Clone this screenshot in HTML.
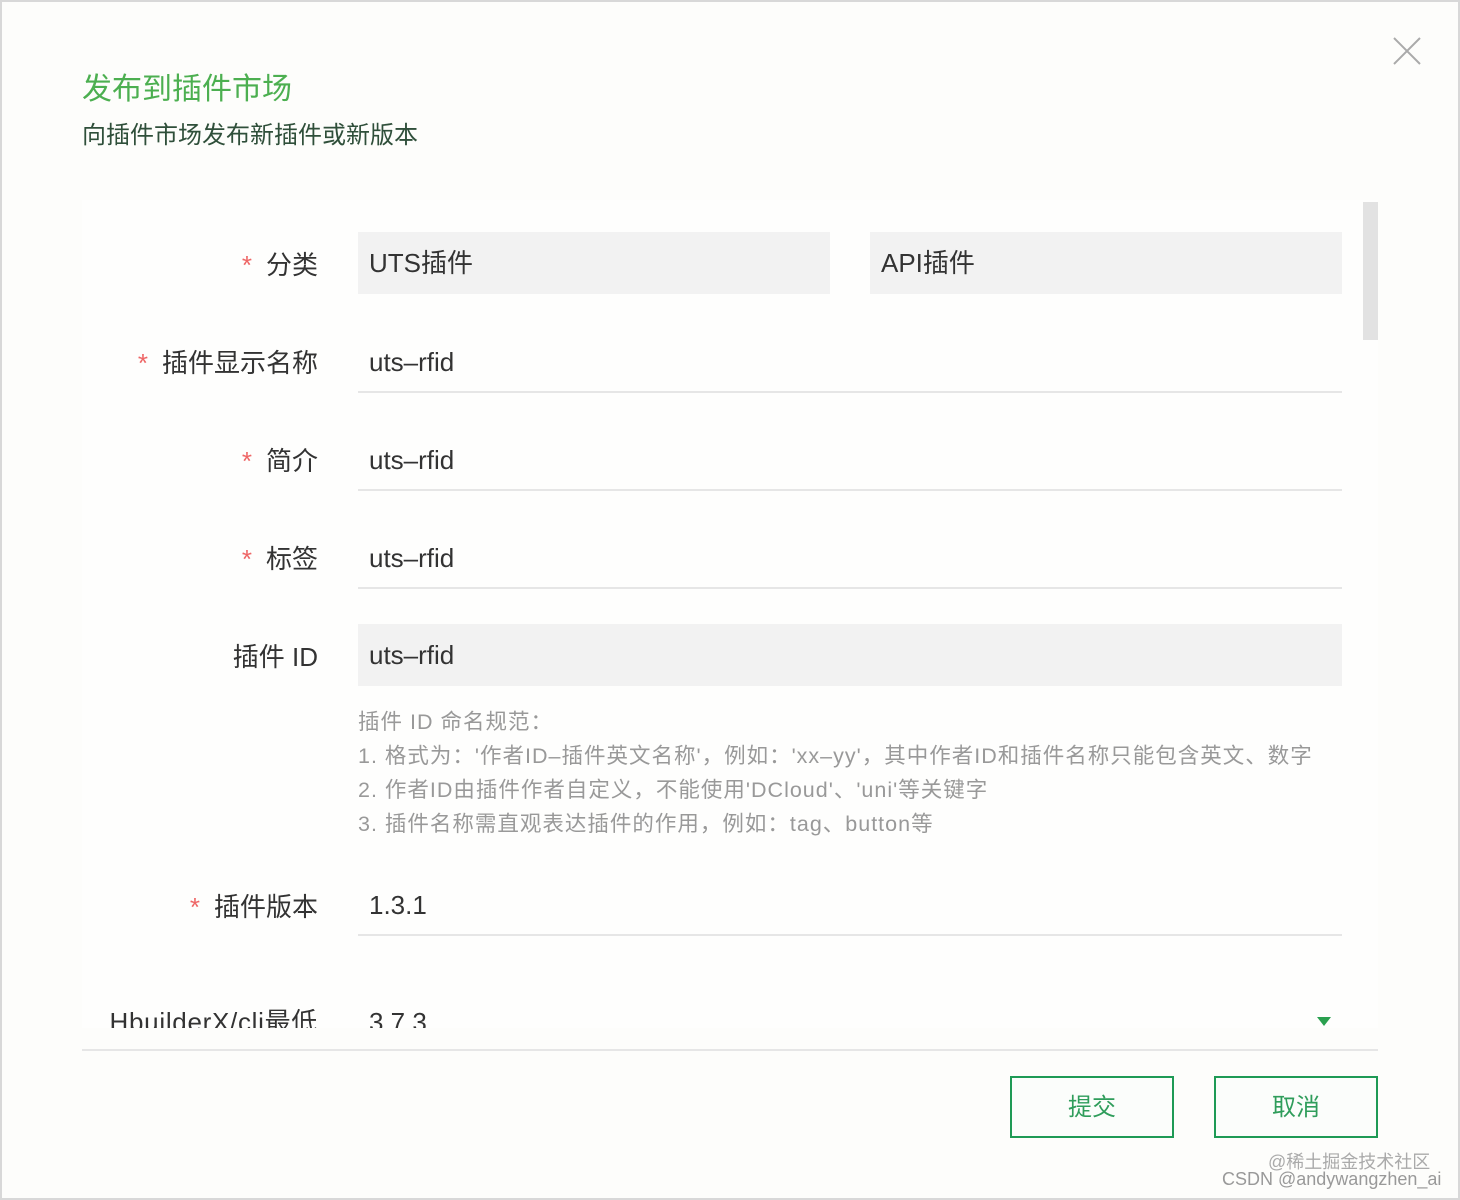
<!DOCTYPE html>
<html><head><meta charset="utf-8"><style>
*{margin:0;padding:0;box-sizing:border-box}
body{width:1460px;height:1200px;background:#fdfdfb;font-family:"Liberation Sans","Noto Sans CJK SC",sans-serif;position:relative;overflow:hidden}
.a{position:absolute}
.frame{left:0;top:0;width:1460px;height:1200px;border:2px solid #d8d8d8}
.t1{left:82px;top:64px;font-size:30px;color:#4caf50}
.t2{left:82px;top:115px;font-size:24px;color:#2f4f3a}
.form{left:82px;top:200px;width:1296px;height:828px;overflow:hidden;background:#fefefd}
.lbl{position:absolute;right:1060px;font-size:26px;color:#333;white-space:nowrap;line-height:30px;top:1px}
.lbl b{color:#e66;font-weight:normal;margin-right:14px}
.in{position:absolute;left:276px;width:984px;height:62px;font-size:26px;color:#333;padding-left:11px;line-height:62px}
.g{background:#f2f2f2}
.u{border-bottom:2px solid #e6e6e6}
.help{position:absolute;left:276px;top:505px;font-size:21.5px;color:#999;line-height:34px;white-space:nowrap;letter-spacing:1px}
.btn{top:1076px;width:164px;height:62px;border:2px solid #1e9a55;color:#2f9d5b;font-size:24px;text-align:center;line-height:60px;background:#fbfdfb}
</style></head><body>
<div class="a frame"></div>
<div class="a t1">发布到插件市场</div>
<div class="a t2">向插件市场发布新插件或新版本</div>
<svg class="a" style="left:1393px;top:37px" width="28" height="28"><path d="M1 1L27 27M27 1L1 27" stroke="#aaa" stroke-width="2"/></svg>
<div class="a form">
 <div class="lbl" style="top:50px"><b>*</b>分类</div>
 <div class="in g" style="top:32px;width:472px">UTS插件</div>
 <div class="in g" style="top:32px;left:788px;width:472px">API插件</div>
 <div class="lbl" style="top:148px"><b>*</b>插件显示名称</div>
 <div class="in u" style="top:131px">uts–rfid</div>
 <div class="lbl" style="top:246px"><b>*</b>简介</div>
 <div class="in u" style="top:229px">uts–rfid</div>
 <div class="lbl" style="top:344px"><b>*</b>标签</div>
 <div class="in u" style="top:327px">uts–rfid</div>
 <div class="lbl" style="top:442px">插件 ID</div>
 <div class="in g" style="top:424px">uts–rfid</div>
 <div class="help">插件 ID 命名规范：<br>1. 格式为：'作者ID–插件英文名称'，例如：'xx–yy'，其中作者ID和插件名称只能包含英文、数字<br>2. 作者ID由插件作者自定义，不能使用'DCloud'、'uni'等关键字<br>3. 插件名称需直观表达插件的作用，例如：tag、button等</div>
 <div class="lbl" style="top:692px"><b>*</b>插件版本</div>
 <div class="in u" style="top:674px">1.3.1</div>
 <div class="lbl" style="top:807px;letter-spacing:0.7px">HbuilderX/cli最低</div>
 <div class="in" style="top:791px">3.7.3</div>
 <svg style="position:absolute;left:1235px;top:817px" width="14" height="10"><path d="M0 0H14L7 9Z" fill="#2aa04f"/></svg>
 <div style="position:absolute;left:1281px;top:2px;width:15px;height:138px;background:#e2e2e2"></div>
</div>
<div class="a" style="left:82px;top:1049px;width:1296px;height:2px;background:#e6e6e6"></div>
<div class="a btn" style="left:1010px">提交</div>
<div class="a btn" style="left:1214px">取消</div>
<div class="a" style="left:1268px;top:1148px;font-size:18px;color:#aaa">@稀土掘金技术社区</div>
<div class="a" style="left:1222px;top:1169px;font-size:18px;color:#999">CSDN @andywangzhen_ai</div>
</body></html>
